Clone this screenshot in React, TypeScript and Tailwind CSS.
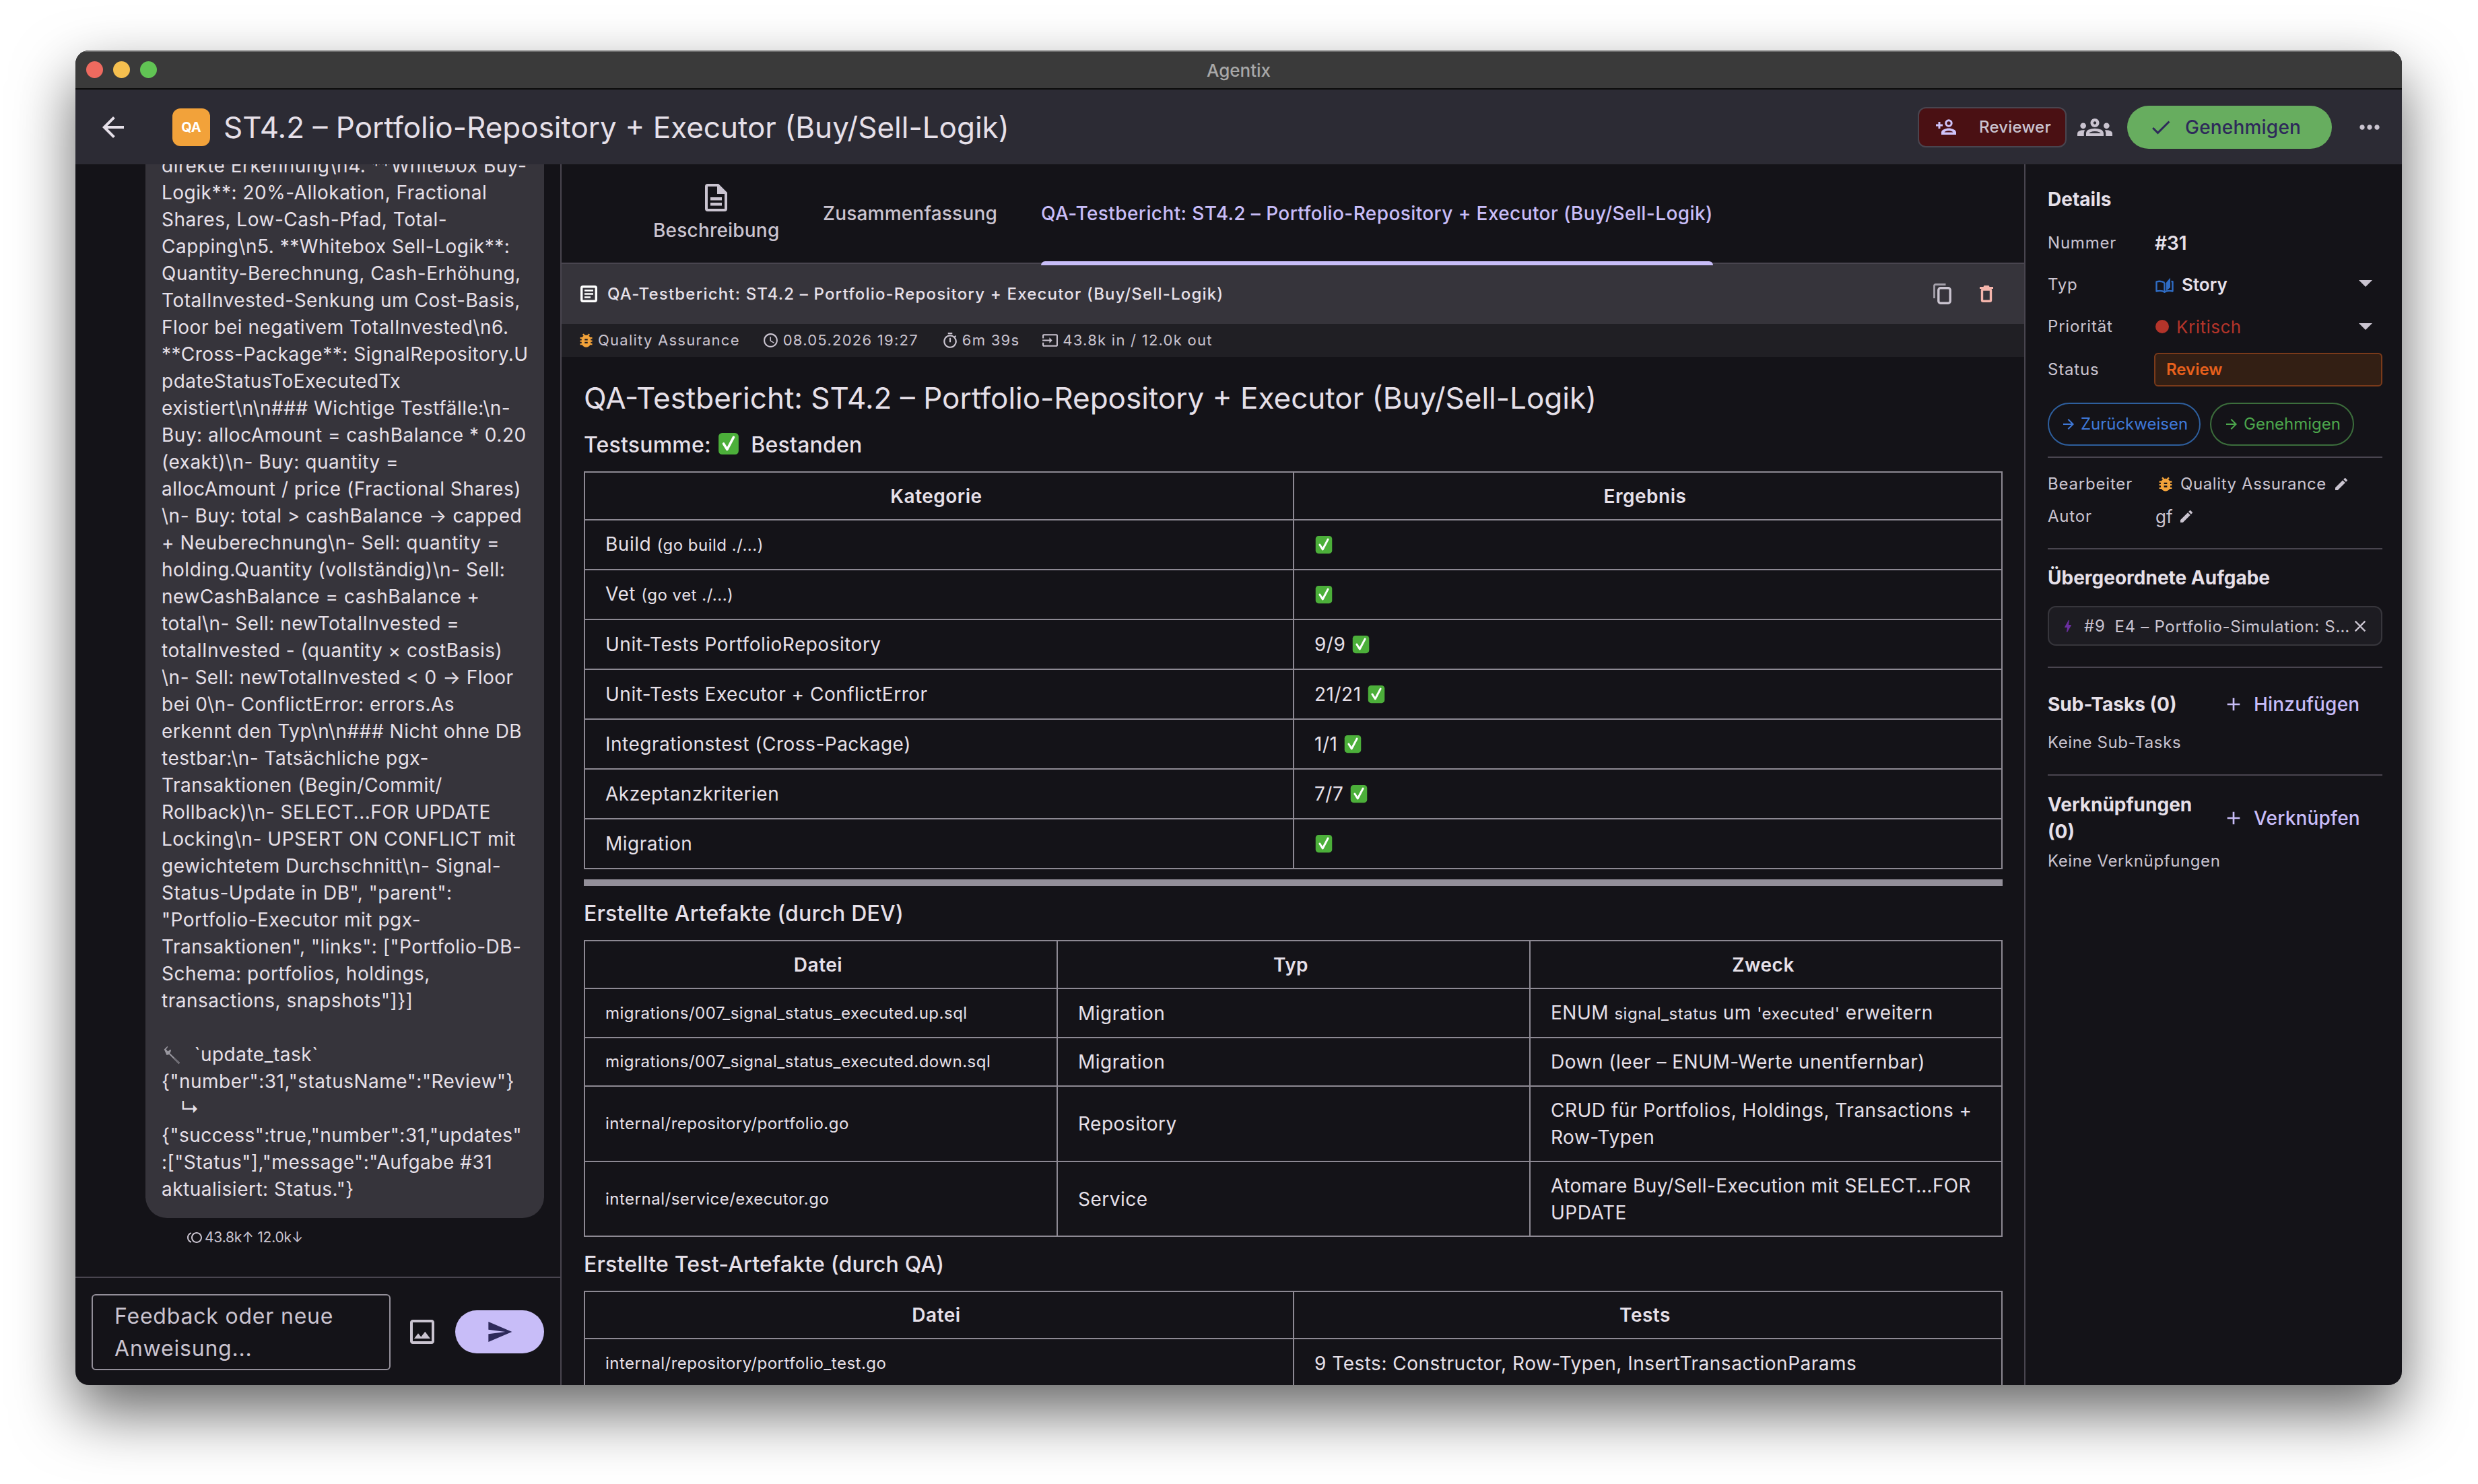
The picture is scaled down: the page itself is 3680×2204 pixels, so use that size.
import React from 'react';
import {
  MdArrowBack, MdOutlineGroups, MdCheck, MdMoreHoriz, MdBugReport, MdOutlineSchedule, MdOutlineTimer, MdOutlineInput,
  MdArrowDropDown, MdArrowForward, MdEdit, MdBolt, MdClose, MdAdd, MdOutlineImage, MdSend, MdOutlineToll,
} from 'react-icons/md';

const chatLines = [
  'direkte Erkennung\\n4. **Whitebox Buy-',
  'Logik**: 20%-Allokation, Fractional',
  'Shares, Low-Cash-Pfad, Total-',
  'Capping\\n5. **Whitebox Sell-Logik**:',
  'Quantity-Berechnung, Cash-Erhöhung,',
  'TotalInvested-Senkung um Cost-Basis,',
  'Floor bei negativem TotalInvested\\n6.',
  '**Cross-Package**: SignalRepository.U',
  'pdateStatusToExecutedTx',
  'existiert\\n\\n### Wichtige Testfälle:\\n-',
  'Buy: allocAmount = cashBalance * 0.20',
  '(exakt)\\n- Buy: quantity =',
  'allocAmount / price (Fractional Shares)',
  '\\n- Buy: total > cashBalance → capped',
  '+ Neuberechnung\\n- Sell: quantity =',
  'holding.Quantity (vollständig)\\n- Sell:',
  'newCashBalance = cashBalance +',
  'total\\n- Sell: newTotalInvested =',
  'totalInvested - (quantity × costBasis)',
  '\\n- Sell: newTotalInvested < 0 → Floor',
  'bei 0\\n- ConflictError: errors.As',
  'erkennt den Typ\\n\\n### Nicht ohne DB',
  'testbar:\\n- Tatsächliche pgx-',
  'Transaktionen (Begin/Commit/',
  'Rollback)\\n- SELECT...FOR UPDATE',
  'Locking\\n- UPSERT ON CONFLICT mit',
  'gewichtetem Durchschnitt\\n- Signal-',
  'Status-Update in DB", "parent":',
  '"Portfolio-Executor mit pgx-',
  'Transaktionen", "links": ["Portfolio-DB-',
  'Schema: portfolios, holdings,',
  'transactions, snapshots"]}]',
];

const toolLines = [
  '{"number":31,"statusName":"Review"}',
  '↳',
  '{"success":true,"number":31,"updates"',
  ':["Status"],"message":"Aufgabe #31',
  'aktualisiert: Status."}',
];

function CheckEmoji({ size = 28 }: { size?: number }) {
  return (
    <svg width={size} height={size} viewBox="0 0 32 32" className="inline-block align-[-4px]">
      <rect x="2" y="1" width="28" height="30" rx="5" fill="#4caf3a" />
      <path d="M9 16l5 8L23 7" fill="none" stroke="#fff" strokeWidth="3.4" strokeLinecap="round" strokeLinejoin="round" />
    </svg>
  );
}

function WrenchEmoji() {
  return (
    <svg width="30" height="30" viewBox="0 0 32 32" className="inline-block align-[-6px]">
      <path d="M4 7l5-5 1 1-3 4 3 3 4-3 1 2-2 4L29 28l-2 2L12 15l-4 1z" fill="#9a98a0" />
      <path d="M20 20l9 8-2 2-8-9z" fill="#6e6c74" />
    </svg>
  );
}

function PersonAddIcon() {
  return (
    <svg width="31" height="23" viewBox="0 0 31 23" className="text-[#d0c4fb]">
      <g fill="none" stroke="currentColor" strokeWidth="3">
        <circle cx="19" cy="6" r="4.2" />
        <path d="M0 9h10M5 4v10" />
      </g>
      <path d="M8 23v-3.5c0-3.5 6-6 11-6s11 2.5 11 6V23zM12.5 19.5h13c-1-1.5-3.600-2.500-6.500-2.500s-5.500 1-6.500 2.500z" fill="currentColor" fillRule="evenodd" />
    </svg>
  );
}

function BookIcon() {
  return (
    <svg width="27" height="23" viewBox="0 0 27 23" className="shrink-0 text-[#2f6cc4]">
      <path d="M13.500 8C11 6 6 5.300 1.500 6.300V20.500C6 19.500 11 20 13.500 21.800C16 20 21 19.500 25.500 20.500V6.300L23.500 6M13.500 8V21.800" fill="none" stroke="currentColor" strokeWidth="2.400" strokeLinejoin="round" />
      <path d="M16 7.500L22 0.500V15L16 20z" fill="currentColor" />
    </svg>
  );
}

function CopyIcon() {
  return (
    <svg width="27" height="31" viewBox="0 0 27 31" className="text-[#cac4d0]">
      <rect x="7.800" y="6.800" width="17.400" height="22.400" rx="3" fill="none" stroke="currentColor" strokeWidth="3.400" />
      <path d="M1.500 22V3.500a2 2 0 0 1 2-2H18.500" fill="none" stroke="currentColor" strokeOpacity="0.75" strokeWidth="2.800" />
    </svg>
  );
}

function TrashIcon() {
  return (
    <svg width="20" height="25" viewBox="0 0 20 25" className="text-[#f5b5ac]">
      <path d="M6.500 0h7l1 2h5.500v3H0V2h5.500z" fill="currentColor" />
      <rect x="3.500" y="6" width="13" height="17.300" rx="1.500" fill="none" stroke="currentColor" strokeWidth="3.400" />
    </svg>
  );
}

function DocIcon() {
  return (
    <svg width="33" height="41" viewBox="0 0 33 41" className="text-[#cac4d0]">
      <path d="M4 0H20L33 13V37a4 4 0 0 1-4 4H4a4 4 0 0 1-4-4V4a4 4 0 0 1 4-4zM4 4V37H29V15H18V4z" fill="currentColor" fillRule="evenodd" />
      <rect x="8" y="20" width="17" height="4.500" fill="currentColor" />
      <rect x="8" y="28" width="17" height="4.500" fill="currentColor" />
    </svg>
  );
}

function ArticleIcon() {
  return (
    <svg width="25" height="25" viewBox="0 0 25 25" className="shrink-0 text-white">
      <rect x="1.700" y="1.700" width="21.600" height="21.600" rx="2" fill="none" stroke="currentColor" strokeWidth="3.400" />
      <path d="M6 7.500h13M6 12.500h13M6 17.500h9" stroke="currentColor" strokeWidth="2.400" />
    </svg>
  );
}

function Cell({ children, head = false, small = false }: { children: React.ReactNode; head?: boolean; small?: boolean }) {
  if (head) {
    return <th className="border-2 border-[#8d8993] text-center text-[28px] font-semibold tracking-[0.5px] text-[#e6e0e9] pl-[24px] pr-[32px] py-0">{children}</th>;
  }
  return <td className={`border-2 border-[#8d8993] text-left px-[30px] py-0 leading-[40px] text-[#e6e0e9] ${small ? 'text-[24px] tracking-[0.5px]' : 'text-[28px] tracking-[0.5px]'}`}>{children}</td>;
}

const summaryRows: [React.ReactNode, React.ReactNode][] = [
  [<>Build <span className="text-[24px]">(go build ./...)</span></>, <CheckEmoji />],
  [<>Vet <span className="text-[24px]">(go vet ./...)</span></>, <CheckEmoji />],
  ['Unit-Tests PortfolioRepository', <>9/9 <CheckEmoji /></>],
  ['Unit-Tests Executor + ConflictError', <>21/21 <CheckEmoji /></>],
  ['Integrationstest (Cross-Package)', <>1/1 <CheckEmoji /></>],
  ['Akzeptanzkriterien', <>7/7 <CheckEmoji /></>],
  ['Migration', <CheckEmoji />],
];

const artefactRows = [
  { file: 'migrations/007_signal_status_executed.up.sql', type: 'Migration', purpose: <>ENUM <span className="text-[24px]">signal_status</span> um <span className="text-[24px]">'executed'</span> erweitern</>, h: 'h-[73px]' },
  { file: 'migrations/007_signal_status_executed.down.sql', type: 'Migration', purpose: 'Down (leer – ENUM-Werte unentfernbar)', h: 'h-[72px]' },
  { file: 'internal/repository/portfolio.go', type: 'Repository', purpose: <>CRUD für Portfolios, Holdings, Transactions +<br />Row-Typen</>, h: 'h-[112px]' },
  { file: 'internal/service/executor.go', type: 'Service', purpose: <><span className="tracking-[0.38px]">Atomare Buy/Sell-Execution mit SELECT…FOR</span><br />UPDATE</>, h: 'h-[111px]' },
];

function Divider() {
  return <div className="h-[2px] bg-[#49454f]" />;
}

function Label({ children }: { children: React.ReactNode }) {
  return <div className="w-[158px] shrink-0 text-[24px] tracking-[0.8px] text-[#cac4d0]">{children}</div>;
}

export default function App() {
  return (
    <div className="w-[3680px] h-[2204px] overflow-hidden bg-white pt-[75px] pl-[112px] [font-family:Inter,sans-serif]">
      <div className="w-[3455px] h-[1982px] rounded-[20px] overflow-hidden flex flex-col shadow-[0_40px_90px_rgba(0,0,0,0.6)] bg-[#141318]">
        {/* title bar */}
        <div className="relative h-[58px] shrink-0 bg-[#3a3a3a] border-t-2 border-t-[#6a6a6a] border-b-2 border-b-[#0b0b0b] flex items-center justify-center">
          <div className="absolute left-[16px] top-[14px] flex gap-[15px]">
            <div className="w-[25px] h-[25px] rounded-full bg-[#ee6a5f]" />
            <div className="w-[25px] h-[25px] rounded-full bg-[#f5bf4f]" />
            <div className="w-[25px] h-[25px] rounded-full bg-[#61c454]" />
          </div>
          <span className="text-[26px] font-medium text-[#a8a8a8]">Agentix</span>
        </div>

        {/* app header */}
        <div className="h-[111px] shrink-0 bg-[#2c2b34] flex items-center pl-[32px] pr-[26px]">
          <MdArrowBack size={48} className="text-[#e6e0e9] shrink-0" />
          <div className="ml-[64px] w-[56px] h-[56px] rounded-[12px] bg-[#f2a23a] flex items-center justify-center text-[20px] font-bold text-white">QA</div>
          <div className="ml-[20px] text-[44px] text-[#e6e0e9]">ST4.2 – Portfolio-Repository + Executor (Buy/Sell-Logik)</div>
          <div className="ml-auto flex items-center">
            <div className="w-[221px] h-[60px] rounded-[12px] bg-[#4a1013] border-2 border-[#49454f] flex items-center pl-[25px]">
              <PersonAddIcon />
              <span className="ml-[33px] text-[24px] font-medium tracking-[0.2px] text-[#cac4d0]">Reviewer</span>
            </div>
            <MdOutlineGroups size={52} className="ml-[16px] text-[#cac4d0]" />
            <div className="ml-[22px] w-[304px] h-[64px] rounded-full bg-[#67ad5f] flex items-center pl-[32px]">
              <MdCheck size={36} className="text-[#2e2a5a]" />
              <span className="ml-[18px] text-[28px] font-medium tracking-[0.2px] text-[#2e2a5a]">Genehmigen</span>
            </div>
            <MdMoreHoriz size={44} className="ml-[34px] text-[#cac4d0]" />
          </div>
        </div>

        <div className="flex-1 flex min-h-0">
          {/* chat panel */}
          <div className="w-[722px] shrink-0 flex flex-col border-r-2 border-r-[#49454f]">
            <div className="flex-1 min-h-0 overflow-hidden flex flex-col justify-end pl-[104px] pr-[24px]">
              <div className="w-[592px] shrink-0 bg-[#36343b] rounded-b-[32px] px-[24px] pb-[23px] text-[28px] leading-[40px] tracking-[0.5px] text-[#e6e0e9]">
                {chatLines.map((line, i) => (
                  <div key={i} className="whitespace-nowrap h-[40px]">{line}</div>
                ))}
                <div className="h-[40px]" />
                <div className="h-[40px] whitespace-nowrap"><WrenchEmoji /> <span className="ml-[10px]">`update_task`</span></div>
                {toolLines.map((line, i) => (
                  <div key={i} className={`whitespace-nowrap h-[40px] ${line === '↳' ? 'pl-[28px]' : ''}`}>{line}</div>
                ))}
              </div>
              <div className="shrink-0 h-[87px] pl-[61px] pt-[15px] flex items-start text-[21px] leading-[28px] tracking-[-0.2px] text-[#cac4d0]">
                <MdOutlineToll size={24} className="mt-[2px]" />
                <span className="ml-[3px]">43.8k↑ 12.0k↓</span>
              </div>
            </div>
            <div className="h-[2px] shrink-0 bg-[#49454f]" />
            <div className="h-[159px] shrink-0 flex items-start pl-[24px]">
              <div className="mt-[24px] w-[444px] h-[113px] rounded-[6px] border-2 border-[#938f99] pl-[32px] pt-[7px] text-[32px] leading-[48px] tracking-[0.8px] text-[#cac4d0]">
                Feedback oder neue<br />Anweisung...
              </div>
              <MdOutlineImage size={48} className="mt-[56px] ml-[23px] text-[#cac4d0]" />
              <div className="mt-[48px] ml-[25px] w-[132px] h-[64px] rounded-full bg-[#c8bdf8] flex items-center justify-center">
                <MdSend size={40} className="text-[#2e2a5a]" />
              </div>
            </div>
          </div>

          {/* main panel */}
          <div className="w-[2172px] shrink-0 flex flex-col min-w-0">
            <div className="relative h-[148px] shrink-0 border-b-2 border-b-[#49454f] flex">
              <div className="w-[388px] pl-[136px] pt-[29px]">
                <div className="inline-flex flex-col items-center">
                  <DocIcon />
                  <div className="mt-[7px] text-[28px] font-medium tracking-[0.2px] text-[#cac4d0]">Beschreibung</div>
                </div>
              </div>
              <div className="pt-[52px] text-[28px] font-medium tracking-[0.2px] text-[#cac4d0]">Zusammenfassung</div>
              <div className="ml-[65px] relative pt-[52px] h-[148px] text-[28px] font-medium tracking-[0.4px] text-[#c8bdf8]">
                QA-Testbericht: ST4.2 – Portfolio-Repository + Executor (Buy/Sell-Logik)
                <div className="absolute left-0 right-0 bottom-[-2px] h-[6px] rounded-t-[6px] bg-[#c8bdf8]" />
              </div>
            </div>
            <div className="h-[89px] shrink-0 bg-[#36343b] flex items-center pl-[28px] pr-[46px]">
              <ArticleIcon />
              <span className="ml-[15px] text-[24px] font-medium tracking-[1.18px] text-[#e6e0e9]">QA-Testbericht: ST4.2 – Portfolio-Repository + Executor (Buy/Sell-Logik)</span>
              <div className="ml-auto"><CopyIcon /></div>
              <div className="ml-[42px]"><TrashIcon /></div>
            </div>
            <div className="h-[49px] shrink-0 bg-[#201f24] flex items-center pl-[23px] text-[22px] tracking-[1.25px] text-[#cac4d0]">
              <MdBugReport size={27} className="text-[#f2a23a]" />
              <span className="ml-[4px]">Quality Assurance</span>
              <MdOutlineSchedule size={25} className="ml-[33px]" />
              <span className="ml-[6px]">08.05.2026 19:27</span>
              <MdOutlineTimer size={26} className="ml-[34px]" />
              <span className="ml-[5px]">6m 39s</span>
              <MdOutlineInput size={25} className="ml-[33px]" />
              <span className="ml-[6px]">43.8k in / 12.0k out</span>
            </div>

            <div className="flex-1 min-h-0 overflow-hidden pl-[33px] pr-[32px]">
              <div className="mt-[33px] h-[56px] text-[44px] leading-[56px] text-[#e6e0e9]">QA-Testbericht: ST4.2 – Portfolio-Repository + Executor (Buy/Sell-Logik)</div>
              <div className="mt-[22px] h-[40px] text-[32px] leading-[40px] font-medium tracking-[0.2px] text-[#e6e0e9]">Testsumme: <CheckEmoji size={34} /> <span className="ml-[8px]">Bestanden</span></div>
              <table className="mt-[19px] w-[2107px] table-fixed border-collapse">
                <colgroup><col className="w-[1053px]" /><col /></colgroup>
                <thead><tr className="h-[71px]"><Cell head>Kategorie</Cell><Cell head>Ergebnis</Cell></tr></thead>
                <tbody>
                  {summaryRows.map((row, i) => (
                    <tr key={i} className="h-[74px]"><Cell>{row[0]}</Cell><Cell>{row[1]}</Cell></tr>
                  ))}
                </tbody>
              </table>
              <div className="mt-[15px] h-[10px] w-[2107px] bg-[#938f99]" />
              <div className="mt-[21px] h-[40px] text-[32px] leading-[40px] font-medium tracking-[0.2px] text-[#e6e0e9]">Erstellte Artefakte (durch DEV)</div>
              <table className="mt-[19px] w-[2107px] table-fixed border-collapse">
                <colgroup><col className="w-[702px]" /><col className="w-[702px]" /><col /></colgroup>
                <thead><tr className="h-[71px]"><Cell head>Datei</Cell><Cell head>Typ</Cell><Cell head>Zweck</Cell></tr></thead>
                <tbody>
                  {artefactRows.map((row) => (
                    <tr key={row.file} className={row.h}><Cell small>{row.file}</Cell><Cell>{row.type}</Cell><Cell>{row.purpose}</Cell></tr>
                  ))}
                </tbody>
              </table>
              <div className="mt-[21px] h-[40px] text-[32px] leading-[40px] font-medium tracking-[0.2px] text-[#e6e0e9]">Erstellte Test-Artefakte (durch QA)</div>
              <table className="mt-[19px] w-[2107px] table-fixed border-collapse">
                <colgroup><col className="w-[1053px]" /><col /></colgroup>
                <thead><tr className="h-[70px]"><Cell head>Datei</Cell><Cell head>Tests</Cell></tr></thead>
                <tbody>
                  <tr className="h-[74px]"><Cell small>internal/repository/portfolio_test.go</Cell><Cell>9 Tests: Constructor, Row-Typen, InsertTransactionParams</Cell></tr>
                </tbody>
              </table>
            </div>
          </div>

          {/* details sidebar */}
          <div className="flex-1 min-w-0 border-l-2 border-l-[#49454f] pl-[33px] pr-[29px]">
            <div className="mt-[34px] h-[36px] text-[28px] leading-[36px] font-bold text-[#e6e0e9]">Details</div>
            <div className="mt-[16px] h-[62px] flex items-center">
              <Label>Nummer</Label>
              <span className="ml-[1px] text-[28px] font-semibold text-[#e6e0e9]">#31</span>
            </div>
            <div className="h-[62px] flex items-center">
              <Label>Typ</Label>
              <span className="ml-[2px] flex"><BookIcon /></span>
              <span className="ml-[12px] -mt-[2px] text-[26px] font-semibold text-[#e6e0e9]">Story</span>
              <MdArrowDropDown size={48} className="ml-auto mr-[1px] -mt-[6px] text-[#cac4d0]" />
            </div>
            <div className="h-[62px] flex items-center">
              <Label>Priorität</Label>
              <div className="w-[20px] h-[20px] ml-[2px] rounded-full bg-[#b3342a]" />
              <span className="ml-[11px] text-[26px] tracking-[0.5px] text-[#b3342a]">Kritisch</span>
              <MdArrowDropDown size={48} className="ml-auto mr-[1px] -mt-[2px] text-[#cac4d0]" />
            </div>
            <div className="h-[50px] mt-[8px] flex items-center">
              <Label>Status</Label>
              <div className="flex-1 h-[50px] rounded-[6px] bg-[#331f14] border-2 border-[#7a3a1a] flex items-center pl-[16px] text-[24px] font-semibold text-[#e8601c]">Review</div>
            </div>
            <div className="mt-[24px] flex gap-[14px]">
              <div className="w-[227px] h-[64px] rounded-full border-2 border-[#2e5f9e] flex items-center justify-center text-[24px] text-[#3f78d8]">
                <MdArrowForward size={24} className="mr-[6px]" />Zurückweisen
              </div>
              <div className="w-[214px] h-[64px] rounded-full border-2 border-[#3c6e3c] flex items-center justify-center text-[24px] text-[#4ca64c]">
                <MdArrowForward size={24} className="mr-[6px]" />Genehmigen
              </div>
            </div>
            <div className="mt-[16px]"><Divider /></div>
            <div className="mt-[19px] h-[40px] flex items-center">
              <Label>Bearbeiter</Label>
              <MdBugReport size={28} className="ml-[3px] text-[#f2a23a]" />
              <span className="ml-[8px] text-[24px] tracking-[0.6px] text-[#cac4d0]">Quality Assurance</span>
              <MdEdit size={24} className="ml-[10px] text-[#cac4d0]" />
            </div>
            <div className="mt-[8px] h-[40px] flex items-center">
              <Label>Autor</Label>
              <span className="ml-[2px] text-[26px] text-[#cac4d0]">gf</span>
              <MdEdit size={24} className="ml-[8px] text-[#cac4d0]" />
            </div>
            <div className="mt-[27px]"><Divider /></div>
            <div className="mt-[24px] h-[36px] text-[28px] leading-[36px] font-bold text-[#e6e0e9]">Übergeordnete Aufgabe</div>
            <div className="mt-[24px] h-[59px] rounded-[12px] bg-[#1d1c22] border-2 border-[#37363c] flex items-center pl-[16px] pr-[17px] text-[24px] tracking-[0.7px] text-[#cac4d0]">
              <MdBolt size={24} className="text-[#6b2fa0] shrink-0" />
              <span className="ml-[12px] shrink-0">#9</span>
              <span className="ml-[14px] pt-[2px] flex-1 min-w-0 whitespace-nowrap">E4 – Portfolio-Simulation: S…</span>
              <MdClose size={28} className="shrink-0 text-[#cac4d0]" />
            </div>
            <div className="mt-[31px]"><Divider /></div>
            <div className="mt-[34px] h-[40px] flex items-center">
              <span className="w-[260px] text-[28px] font-bold text-[#e6e0e9]">Sub-Tasks (0)</span>
              <MdAdd size={32} className="text-[#c8bdf8]" />
              <span className="ml-[14px] text-[28px] font-medium tracking-[0.2px] text-[#c8bdf8]">Hinzufügen</span>
            </div>
            <div className="mt-[21px] h-[32px] text-[24px] leading-[32px] tracking-[0.6px] text-[#cac4d0]">Keine Sub-Tasks</div>
            <div className="mt-[31px]"><Divider /></div>
            <div className="mt-[23px] flex items-center">
              <span className="w-[260px] text-[28px] leading-[40px] font-bold text-[#e6e0e9]">Verknüpfungen<br />(0)</span>
              <MdAdd size={32} className="text-[#c8bdf8]" />
              <span className="ml-[14px] text-[28px] font-medium tracking-[0.2px] text-[#c8bdf8]">Verknüpfen</span>
            </div>
            <div className="mt-[8px] h-[32px] text-[24px] leading-[32px] tracking-[0.6px] text-[#cac4d0]">Keine Verknüpfungen</div>
          </div>
        </div>
      </div>
    </div>
  );
}
